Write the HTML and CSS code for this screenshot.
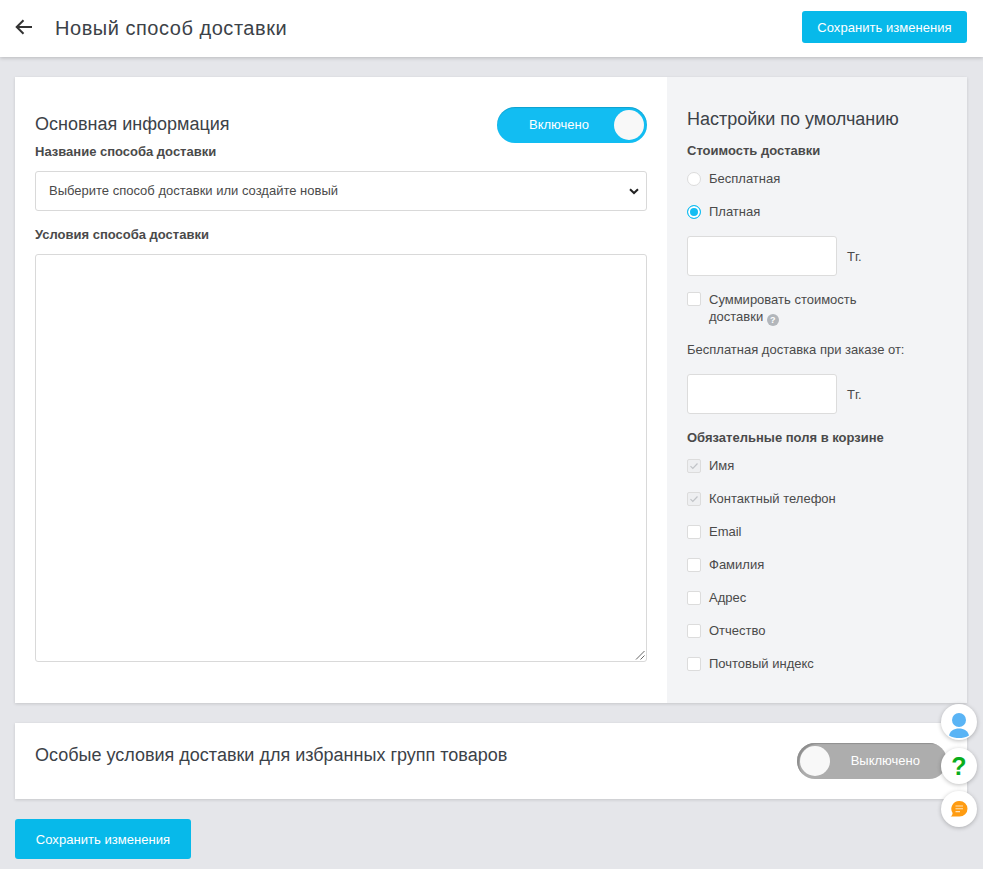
FILE: index.html
```html
<!DOCTYPE html>
<html lang="ru">
<head>
<meta charset="utf-8">
<title>Новый способ доставки</title>
<link rel="stylesheet" href="styles.css">
</head>
<body>
<header class="topbar">
  <div class="topbar-left">
    <svg class="back" width="18" height="16" viewBox="0 0 18 16"><path d="M17 8H2M8.500 1.200 1.700 8l6.800 6.800" fill="none" stroke="#333" stroke-width="2"/></svg>
    <h1 class="page-title">Новый способ доставки</h1>
  </div>
  <button class="btn">Сохранить изменения</button>
</header>
<main class="content">
  <section class="card main-card">
    <div class="left-col">
      <div class="head-row">
        <h2 class="section-title main-title">Основная информация</h2>
        <div class="toggle on"><span class="toggle-text">Включено</span><span class="knob"></span></div>
      </div>
      <div class="field-label first-label">Название способа доставки</div>
      <div class="select"><span class="select-text">Выберите способ доставки или создайте новый</span>
        <svg width="10" height="7" viewBox="0 0 10 7"><path d="M1 1.200 5 5l4-3.800" fill="none" stroke="#222" stroke-width="2"/></svg>
      </div>
      <div class="field-label cond-label">Условия способа доставки</div>
      <div class="textarea">
        <svg class="grip" width="10" height="10" viewBox="0 0 10 10"><path d="M9.500 1 1 9.500M9.500 5.500 5.500 9.500" stroke="#666" stroke-width="1"/></svg>
      </div>
    </div>
    <aside class="right-col">
      <h2 class="section-title side-title">Настройки по умолчанию</h2>
      <div class="field-label cost-label">Стоимость доставки</div>
      <div class="opt"><span class="radio"></span>Бесплатная</div>
      <div class="opt"><span class="radio checked"></span>Платная</div>
      <div class="money money-a"><span class="input"></span><span class="unit">Тг.</span></div>
      <div class="opt-multi"><span class="check"></span><span>Суммировать стоимость<br>доставки <span class="hint">?</span></span></div>
      <div class="free-label">Бесплатная доставка при заказе от:</div>
      <div class="money money-b"><span class="input"></span><span class="unit">Тг.</span></div>
      <div class="field-label req-label">Обязательные поля в корзине</div>
      <div class="opt"><span class="check disabled"><svg width="10" height="8" viewBox="0 0 10 8"><path d="M1.500 4.200 3.800 6.500 8.500 1.500" fill="none" stroke="#c0c3c7" stroke-width="1.200"/></svg></span>Имя</div>
      <div class="opt"><span class="check disabled"><svg width="10" height="8" viewBox="0 0 10 8"><path d="M1.500 4.200 3.800 6.500 8.500 1.500" fill="none" stroke="#c0c3c7" stroke-width="1.200"/></svg></span>Контактный телефон</div>
      <div class="opt"><span class="check"></span>Email</div>
      <div class="opt"><span class="check"></span>Фамилия</div>
      <div class="opt"><span class="check"></span>Адрес</div>
      <div class="opt"><span class="check"></span>Отчество</div>
      <div class="opt"><span class="check"></span>Почтовый индекс</div>
    </aside>
  </section>
  <section class="card special-card">
    <h2 class="section-title special-title">Особые условия доставки для избранных групп товаров</h2>
    <div class="toggle off"><span class="knob"></span><span class="toggle-text">Выключено</span></div>
  </section>
  <button class="btn btn-bottom">Сохранить изменения</button>
</main>
<div class="fab fab-user"><svg width="20" height="25" viewBox="0 0 20 25"><circle cx="10" cy="7" r="7" fill="#5ab4f5"/><path d="M0 22.500C1 18 5 15.500 10 15.500S19 18 20 22.500C17 24.500 13 25 10 25S3 24.500 0 22.500Z" fill="#5ab4f5"/></svg></div>
<div class="fab fab-help">?</div>
<div class="fab fab-chat"><svg width="18" height="17" viewBox="0 0 18 17"><path d="M9.500 0a8 7.800 0 0 1 0 15.600H0.500C2 14.800 2.500 13.500 2.600 12A8 7.800 0 0 1 9.500 0Z" fill="#ff9c12"/><path d="M5.500 5H13M5.500 7.800H13M5.500 10.600H10" stroke="#ffe2b8" stroke-width="1.100"/></svg></div>
</body>
</html>
```
FILE: styles.css
```css
* { box-sizing: border-box; }
html, body { margin: 0; padding: 0; }
body {
  width: 983px;
  height: 869px;
  overflow: hidden;
  position: relative;
  background: #e5e6ea;
  font-family: "Liberation Sans", Arial, sans-serif;
  font-size: 13px;
  color: #4a4a4a;
}
.topbar {
  height: 57px;
  background: #fff;
  box-shadow: 0 1px 4px rgba(0,0,0,.2);
  display: flex;
  align-items: center;
  justify-content: space-between;
  padding: 0 16px 3px 15px;
  position: relative;
}
.topbar-left { display: flex; align-items: center; gap: 22px; }
.back { display: block; margin-top: -1px; }
.page-title { margin: 2px 0 0; font-size: 20px; font-weight: 400; color: #3c4248; letter-spacing: .53px; }
.btn {
  border: 0;
  background: #07b9ea;
  color: #fff;
  border-radius: 3px;
  font: 13px "Liberation Sans", Arial, sans-serif;
  letter-spacing: .05px;
  width: 165px;
  height: 32px;
  padding: 0;
}
.content { padding: 20px 16px 0 15px; }
.card { background: #fff; box-shadow: 0 1px 3px rgba(0,0,0,.14); }
.main-card { display: flex; height: 626px; }
.left-col { width: 652px; padding: 30px 20px 0; }
.head-row { display: flex; justify-content: space-between; align-items: center; height: 36px; }
.section-title { margin: 0; font-size: 18px; font-weight: 400; color: #3c4248; }
.main-title { margin-top: -2px; }
.toggle {
  width: 150px;
  height: 36px;
  border-radius: 18px;
  display: flex;
  align-items: center;
  color: #fff;
  font-size: 13px;
}
.toggle-text { margin-top: -1px; }
.toggle.on { background: #12bdf2; padding: 0 3px 0 32px; justify-content: space-between; box-shadow: inset 0 1px 1px rgba(0,0,0,.15); }
.toggle.off { background: #adadad; padding: 0 27px 0 3px; justify-content: space-between; box-shadow: inset 3px 2px 1px -1px #8f8f8f; }
.knob { width: 30px; height: 30px; border-radius: 50%; background: #f8f8f8; }
.field-label { font-weight: 700; color: #4a4a4a; line-height: 16px; }
.first-label { padding-top: 1px; height: 16px; line-height: 15px; }
.select {
  margin-top: 12px;
  height: 40px;
  border: 1px solid #d9d9d9;
  border-radius: 3px;
  display: flex;
  align-items: center;
  justify-content: space-between;
  padding: 0 7px 0 13px;
  font-size: 13px;
  background: #fff;
}
.select-text { margin-top: -2px; }
.cond-label { margin-top: 15px; padding-top: 1px; height: 16px; line-height: 15px; }
.textarea {
  margin-top: 12px;
  height: 408px;
  border: 1px solid #d9d9d9;
  border-radius: 3px;
  position: relative;
}
.grip { position: absolute; right: 1px; bottom: 1px; }
.right-col { width: 300px; background: #f3f4f6; padding: 32px 20px 0; }
.side-title { line-height: 20px; }
.cost-label { margin-top: 14px; height: 15px; }
.opt { display: flex; align-items: center; gap: 8px; height: 33px; }
.cost-label + .opt { margin-top: 4px; }
.radio {
  width: 14px;
  height: 14px;
  border-radius: 50%;
  background: #fff;
  border: 1px solid #dcdcdc;
}
.radio.checked { border-color: #12bdf2; background: #12bdf2; box-shadow: inset 0 0 0 2px #fff; }
.money { display: flex; align-items: center; gap: 10px; }
.money-a { margin-top: 8px; }
.input { display: block; width: 150px; height: 40px; background: #fff; border: 1px solid #dcdcdc; border-radius: 3px; }
.opt-multi { display: flex; gap: 8px; margin-top: 15px; line-height: 17px; }
.check {
  width: 14px;
  height: 14px;
  flex: none;
  background: #fff;
  border: 1px solid #dcdcdc;
  border-radius: 2px;
  display: flex;
  align-items: center;
  justify-content: center;
}
.opt-multi .check { margin-top: 1px; }
.check.disabled { background: #eeeff1; }
.hint {
  display: inline-block;
  width: 12px;
  height: 12px;
  border-radius: 50%;
  background: #b2b6bb;
  color: #fff;
  font-size: 9px;
  font-weight: 700;
  line-height: 12px;
  text-align: center;
  vertical-align: -2px;
}
.free-label { margin-top: 16px; line-height: 16px; }
.money-b { margin-top: 16px; }
.req-label { margin-top: 16px; margin-bottom: 3px; }
.special-card {
  margin-top: 20px;
  height: 76px;
  padding: 20px 20px 0;
  display: flex;
  justify-content: space-between;
  align-items: flex-start;
}
.special-title { line-height: 24px; }
.btn-bottom { display: block; width: 176px; height: 40px; margin-top: 20px; }
.fab {
  position: absolute;
  left: 941px;
  width: 36px;
  height: 36px;
  border-radius: 50%;
  background: #fff;
  box-shadow: 0 1px 4px rgba(0,0,0,.25);
  display: flex;
  align-items: center;
  justify-content: center;
}
.fab-user { top: 704px; }
.fab-user svg { margin-top: 7px; }
.fab-help { top: 748px; color: #09ad1c; font-size: 25px; font-weight: 700; }
.fab-chat { top: 791px; }
```
